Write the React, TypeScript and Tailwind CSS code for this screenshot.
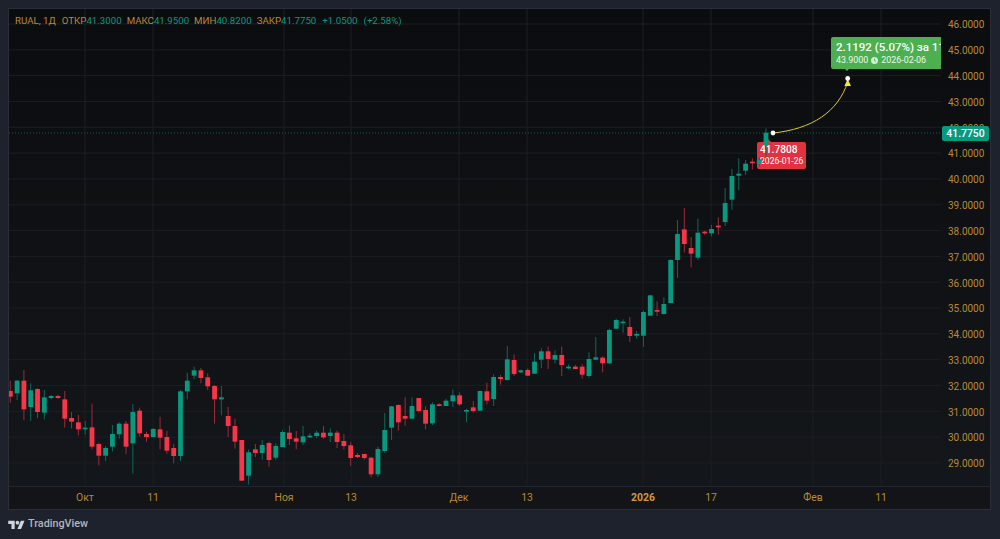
type Row = [number, number, number, number];

// rows are read off the chart: wick top, body top, body bottom, wick bottom
const groups: { originY: number; rows: [string, ...Row][] }[] = [
  {
    originY: 360,
    rows: [
      ["r", 62, 93, 110, 128], ["g", 60, 62, 100, 120], ["r", 30, 62, 148, 180], ["g", 70, 91, 141, 183],
      ["r", 85, 87, 156, 174], ["g", 90, 112, 158, 178], ["g", 105, 108, 114, 118], ["r", 104, 108, 114, 116],
      ["r", 93, 118, 176, 203], ["r", 156, 174, 185, 205], ["r", 165, 187, 208, 226], ["g", 183, 203, 206, 224],
      ["r", 131, 202, 260, 268], ["r", 248, 252, 287, 316], ["g", 258, 264, 287, 303], ["g", 195, 222, 260, 274],
      ["g", 187, 191, 223, 236], ["r", 183, 191, 260, 282], ["g", 132, 156, 250, 341], ["r", 143, 152, 220, 230],
      ["r", 215, 222, 231, 245], ["g", 204, 207, 231, 233], ["r", 170, 208, 233, 268], ["r", 213, 231, 272, 281],
      ["r", 252, 264, 288, 310], ["g", 90, 94, 288, 303], ["g", 38, 62, 94, 118], ["g", 20, 31, 47, 57],
      ["r", 24, 31, 54, 70],
      ["r", 40, 52, 79, 90], ["r", 75, 78, 118, 191], ["g", 78, 112, 118, 166], ["r", 141, 168, 198, 231],
      ["r", 176, 198, 245, 266], ["r", 240, 240, 362, 362], ["g", 268, 277, 347, 374], ["r", 252, 268, 279, 291],
      ["g", 240, 255, 279, 299], ["r", 245, 249, 300, 320], ["g", 250, 258, 293, 299], ["g", 210, 216, 261, 261],
      ["r", 196, 218, 237, 255], ["r", 213, 235, 245, 268], ["g", 198, 229, 247, 255], ["g", 220, 227, 232, 234],
      ["g", 212, 218, 228, 235], ["r", 198, 218, 232, 237], ["g", 205, 218, 228, 246], ["r", 212, 218, 246, 264],
      ["r", 222, 243, 258, 268], ["r", 247, 256, 294, 318], ["r", 279, 285, 291, 294], ["r", 282, 282, 294, 299],
      ["r", 290, 293, 343, 352], ["g", 260, 267, 343, 351], ["g", 159, 210, 273, 278], ["g", 138, 139, 203, 240],
      ["r", 133, 135, 187, 212],
    ],
  },
  {
    originY: 310,
    rows: [
      ["r", 262, 318, 326, 347], ["g", 262, 288, 326, 328], ["r", 264, 264, 303, 308], ["r", 289, 300, 341, 358],
      ["g", 277, 283, 340, 345], ["r", 280, 283, 288, 288], ["g", 266, 272, 288, 288], ["g", 239, 256, 274, 291],
      ["r", 247, 256, 283, 288], ["g", 296, 300, 304, 337], ["r", 273, 292, 303, 308], ["g", 242, 243, 302, 302],
      ["r", 218, 244, 272, 283], ["g", 193, 201, 267, 288], ["r", 195, 201, 207, 224], ["g", 108, 148, 210, 212],
      ["r", 133, 150, 192, 198], ["g", 179, 181, 187, 189], ["r", 175, 180, 197, 198], ["g", 129, 155, 191, 192],
      ["g", 115, 124, 149, 174], ["r", 110, 124, 147, 177], ["g", 121, 135, 149, 160], ["r", 110, 135, 165, 198],
      ["g", 163, 170, 175, 177], ["r", 165, 170, 177, 177], ["r", 162, 170, 194, 206], ["g", 127, 147, 198, 203],
      ["g", 81, 142, 149, 150], ["r", 139, 143, 160, 187], ["g", 56, 60, 160, 162], ["g", 26, 30, 56, 56],
    ],
  },
  {
    originY: 190,
    rows: [
      ["g", 388, 395, 399, 428], ["r", 381, 411, 438, 456], ["g", 423, 432, 437, 446], ["g", 361, 366, 437, 471],
      ["g", 315, 316, 377, 377], ["r", 334, 360, 365, 378], ["g", 322, 342, 372, 374], ["g", 208, 210, 339, 339],
      ["g", 90, 132, 210, 264], ["r", 54, 118, 162, 188], ["r", 141, 174, 191, 232], ["g", 86, 128, 203, 210],
      ["r", 122, 125, 130, 134], ["g", 105, 117, 130, 139], ["r", 82, 107, 112, 134], ["g", -6, 39, 96, 108],
      ["g", -63, -42, 29, 59],
    ],
  },
  {
    originY: 20,
    rows: [
      ["g", 415, 461, 467, 510], ["g", 420, 431, 452, 465], ["r", 415, 425, 429, 448], ["g", 412, 420, 432, 440],
      ["g", 325, 338, 376, 413],
    ],
  },
];

const candles = groups.flatMap((g) =>
  g.rows.map(([kind, wt, bt, bb, wb]) => ({
    kind,
    wickTop: g.originY + wt / 3,
    bodyTop: g.originY + bt / 3,
    bodyBottom: g.originY + bb / 3,
    wickBottom: g.originY + wb / 3,
  })),
);

const prices = [46, 45, 44, 43, 42, 41, 40, 39, 38, 37, 36, 35, 34, 33, 32, 31, 30, 29];
const verticals = [85, 153, 284, 351, 459, 527, 643, 711, 813, 881];

const priceY = (p: number) => 24 + (46 - p) * 25.82;

function Chart() {
  return (
    <svg viewBox="9 9 932 477" className="absolute inset-0 h-full w-full">
      {candles.map((c, i) => {
        const x = 10.3 + 6.808 * i;
        const red = c.kind === "r";
        return (
          <g key={i}>
            <line
              x1={x}
              x2={x}
              y1={c.wickTop}
              y2={c.wickBottom}
              stroke={red ? "#9c2c38" : "#0b6a5a"}
              strokeWidth={1}
            />
            <rect
              x={x - 2.4}
              y={c.bodyTop}
              width={4.8}
              height={Math.max(c.bodyBottom - c.bodyTop, 1.6)}
              fill={red ? "#f7364a" : "#089981"}
            />
          </g>
        );
      })}
      <path d="M773 133C812 129 838 112 847.7 82" fill="none" stroke="#dcc92e" strokeWidth={1} />
      <path d="M847.7 79L851 86H844.4Z" fill="#f6e732" />
      <circle cx={773} cy={133} r={2.4} fill="#ffffff" />
      <circle cx={847.7} cy={78.5} r={2.4} fill="#ffffff" />
    </svg>
  );
}

function Grid() {
  return (
    <svg viewBox="9 9 932 477" className="absolute inset-0 h-full w-full">
      {prices.map((p) => (
        <line key={p} x1={9} x2={941} y1={priceY(p)} y2={priceY(p)} stroke="#1b1e24" strokeWidth={1} />
      ))}
      {verticals.map((x) => (
        <line key={x} x1={x} x2={x} y1={9} y2={486} stroke="#1b1e24" strokeWidth={1} />
      ))}
      <line x1={9} x2={941} y1={133} y2={133} stroke="#0b5f52" strokeWidth={1} strokeDasharray="1 2" />
    </svg>
  );
}

function Legend() {
  return (
    <div className="absolute left-[6px] top-[5px] flex gap-[5px] text-[9.7px] leading-[13px] text-[#b98a35]">
      <span className="mr-[1px]">RUAL, 1Д</span>
      <span>ОТКР<span className="text-[#089981]">41.3000</span></span>
      <span>МАКС<span className="text-[#089981]">41.9500</span></span>
      <span>МИН<span className="text-[#089981]">40.8200</span></span>
      <span>ЗАКР<span className="text-[#089981]">41.7750</span></span>
      <span className="ml-[1px] text-[#089981]">+1.0500</span>
      <span className="ml-[1px] text-[#089981]">(+2.58%)</span>
    </div>
  );
}

function ForecastCallout() {
  return (
    <div className="absolute left-[822px] top-[28px] h-[32px] w-[110px] rounded-l-[2px] bg-[#4caf50] pl-[5px] pt-[3px] text-white">
      <div className="overflow-hidden whitespace-nowrap text-[11.5px] font-medium leading-[14px]">2.1192 (5.07%) за 11</div>
      <div className="flex items-center gap-[3px] whitespace-nowrap text-[8.9px] leading-[12px] text-[#eef8ee]">
        <span>43.9000</span>
        <svg viewBox="0 0 8 8" className="h-[7px] w-[7px]">
          <circle cx="4" cy="4" r="4" fill="#d5ecd6" />
          <path d="M4 1.8V4.2L5.6 5" fill="none" stroke="#4caf50" strokeWidth="1" />
        </svg>
        <span>2026-02-06</span>
      </div>
      <div className="absolute left-[13px] top-[31px] h-0 w-0 border-x-[3.5px] border-t-[3.5px] border-x-transparent border-t-[#4caf50]" />
    </div>
  );
}

function CurrentCallout() {
  return (
    <div className="absolute left-[748px] top-[133px] h-[27px] w-[49px] rounded-[2px] bg-[#e0323f] pl-[3px] pt-[2px] text-white">
      <div className="absolute left-[6px] top-[-4px] h-0 w-0 border-x-[4px] border-b-[4px] border-x-transparent border-b-[#e0323f]" />
      <div className="text-[10.2px] font-medium leading-[12px]">41.7808</div>
      <div className="whitespace-nowrap text-[8.6px] leading-[11px]">2026-01-26</div>
    </div>
  );
}

function PriceAxis() {
  return (
    <div className="relative w-[49px] shrink-0 pt-[3px] text-[10px] text-[#b98a35]">
      {prices.map((p) => (
        <div key={p} className="flex h-[25.82px] items-center pl-[7px]">
          {p.toFixed(4)}
        </div>
      ))}
      <div className="absolute left-[1px] top-[117px] flex h-[15px] w-[47px] items-center justify-center rounded-[2px] bg-[#089981] text-[10.4px] font-medium text-white">
        41.7750
      </div>
    </div>
  );
}

const timeLabels = [
  { text: "Окт", className: "ml-[46px]" },
  { text: "11", className: "ml-2" },
  { text: "Ноя", className: "ml-[71px]" },
  { text: "13", className: "ml-[7px]" },
  { text: "Дек", className: "ml-[48px]" },
  { text: "13", className: "ml-2" },
  { text: "2026", className: "ml-[56px] font-bold text-[#d69a35]" },
  { text: "17", className: "ml-2" },
  { text: "Фев", className: "ml-[42px]" },
  { text: "11", className: "ml-2" },
];

export default function App() {
  return (
    <div
      className="flex h-[539px] w-[1000px] flex-col overflow-hidden bg-[#1e222d]"
      style={{ fontFamily: 'Roboto, "Liberation Sans", Arial, sans-serif' }}
    >
      <div className="ml-2 mt-2 flex h-[502px] w-[983px] flex-col border border-[#2a2e39] bg-gradient-to-b from-[#0b0c0e] to-[#14171b]">
        <div className="flex h-[477px]">
          <div className="relative h-full w-[932px] overflow-hidden">
            <Grid />
            <ForecastCallout />
            <CurrentCallout />
            <Chart />
            <Legend />
          </div>
          <PriceAxis />
        </div>
        <div className="flex h-[23px] items-center border-t border-[#23262e] bg-[#121418] text-[10.4px] text-[#b98a35]">
          {timeLabels.map((l, i) => (
            <span key={i} className={`w-[60px] text-center ${l.className}`}>
              {l.text}
            </span>
          ))}
        </div>
      </div>
      <div className="ml-2 flex flex-1 items-center gap-[3px]">
        <svg viewBox="0 0 36 24" className="h-[11px] w-[17px]" fill="#d1d4dc">
          <path d="M14 22H7V11H0V4h14v18zM28 22h-8l7.5-18h8L28 22z" />
          <circle cx="20" cy="8" r="4" />
        </svg>
        <span className="text-[10.8px] font-medium text-[#b2b5be]">TradingView</span>
      </div>
    </div>
  );
}
